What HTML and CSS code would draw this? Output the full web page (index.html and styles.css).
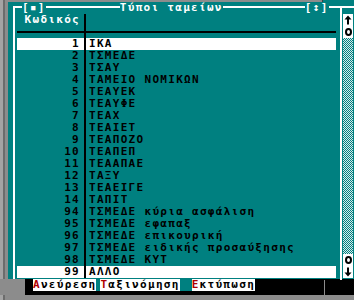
FILE: index.html
```html
<!DOCTYPE html>
<html lang="el">
<head>
    <meta charset="UTF-8">
    <title>Τύποι ταμείων</title>
    <link rel="stylesheet" href="styles.css">
</head>
<body>
    <div class="window">
        <div class="frame">
            <div class="titlebar">
                <span class="tt t-close">[▪]</span>
                <span class="tt t-name">Τύποι ταμείων</span>
                <span class="tt t-zoom">[↕]</span>
            </div>
            <div class="pane">
                <div class="list">
                    <div class="row head"><span class="code">Κωδικός</span><span class="name"></span></div>
                    <div class="row rule"><span class="code"></span><span class="name"></span></div>
                    <div class="row sel"><span class="code">1</span><span class="name">ΙΚΑ</span></div>
                    <div class="row"><span class="code">2</span><span class="name">ΤΣΜΕΔΕ</span></div>
                    <div class="row"><span class="code">3</span><span class="name">ΤΣΑΥ</span></div>
                    <div class="row"><span class="code">4</span><span class="name">ΤΑΜΕΙΟ ΝΟΜΙΚΩΝ</span></div>
                    <div class="row"><span class="code">5</span><span class="name">ΤΕΑΥΕΚ</span></div>
                    <div class="row"><span class="code">6</span><span class="name">ΤΕΑΥΦΕ</span></div>
                    <div class="row"><span class="code">7</span><span class="name">ΤΕΑΧ</span></div>
                    <div class="row"><span class="code">8</span><span class="name">ΤΕΑΙΕΤ</span></div>
                    <div class="row"><span class="code">9</span><span class="name">ΤΕΑΠΟΖΟ</span></div>
                    <div class="row"><span class="code">10</span><span class="name">ΤΕΑΠΕΠ</span></div>
                    <div class="row"><span class="code">11</span><span class="name">ΤΕΑΑΠΑΕ</span></div>
                    <div class="row"><span class="code">12</span><span class="name">ΤΑΞΥ</span></div>
                    <div class="row"><span class="code">13</span><span class="name">ΤΕΑΕΙΓΕ</span></div>
                    <div class="row"><span class="code">14</span><span class="name">ΤΑΠΙΤ</span></div>
                    <div class="row"><span class="code">94</span><span class="name">ΤΣΜΕΔΕ κύρια ασφάλιση</span></div>
                    <div class="row"><span class="code">95</span><span class="name">ΤΣΜΕΔΕ εφαπαξ</span></div>
                    <div class="row"><span class="code">96</span><span class="name">ΤΣΜΕΔΕ επικουρική</span></div>
                    <div class="row"><span class="code">97</span><span class="name">ΤΣΜΕΔΕ ειδικής προσαύξησης</span></div>
                    <div class="row"><span class="code">98</span><span class="name">ΤΣΜΕΔΕ ΚΥΤ</span></div>
                    <div class="row sel"><span class="code">99</span><span class="name">ΑΛΛΟ</span></div>
                </div>
                <div class="vsep"></div>
                <div class="scroll">
                    <div class="sb">
                        <svg width="10" height="12" viewBox="0 0 10 12"><path d="M5 1.5 L8.5 5.5 H6 V10.5 H4 V5.5 H1.5 Z" fill="#000"/></svg>
                    </div>
                    <div class="sb"><span class="ring"></span></div>
                    <div class="track"></div>
                    <div class="sb"><span class="ring"></span></div>
                    <div class="sb">
                        <svg width="10" height="12" viewBox="0 0 10 12"><path d="M5 10.5 L8.5 6.5 H6 V1.5 H4 V6.5 H1.5 Z" fill="#000"/></svg>
                    </div>
                </div>
            </div>
        </div>
    </div>

    <div class="footer">
        <div class="menu">
            <span class="mi"><b>Α</b>νεύρεση</span><span class="gap g1"></span><span class="mi"><b>Τ</b>αξινόμηση</span><span class="gap g2"></span><span class="mi"><b>Ε</b>κτύπωση</span>
        </div>
    </div>
</body>
</html>
```

FILE: styles.css
```css
body {
    margin: 0;
    width: 354px;
    height: 300px;
    overflow: hidden;
    font-family: 'DejaVu Sans Mono', 'Liberation Mono', monospace;
    font-weight: bold;
    font-size: 11px;
    letter-spacing: 1.3px;
    line-height: 12px;
    color: #000;
    background:
        linear-gradient(#404040, #404040) 322px 0 / 1px 3px no-repeat,
        linear-gradient(#008080, #008080) 323px 0 / 31px 2px no-repeat,
        linear-gradient(to right, #a4a4a4 0 3px, #6c6c6c 3px 5px, #8c8c8c 5px);
}

.window {
    margin: 2px 0 0 8px;
    width: 346px;
    height: 282px;
    background: #008080;
    overflow: hidden;
}

.frame {
    margin: 4px 0 0 5px;
    width: 400px;
    border: 2px solid #fff;
    border-right: none;
}

/* title sits on top of the frame line */
.titlebar {
    display: flex;
    height: 12px;
    margin: -6px 0 -6px 0;
    color: #fff;
}

.tt {
    background: #008080;
    white-space: pre;
}

.t-close { margin-left: 7px; }
.t-name { margin-left: 74px; }
.t-zoom { margin-left: 82px; }

.pane {
    display: flex;
    height: 272px;
}

.list {
    width: 325px;
    padding-top: 6px;
}

.row {
    display: flex;
    height: 12px;
    margin-left: 2px;
    width: 319px;
    white-space: pre;
}

.row .code {
    width: 63px;
    padding-right: 4px;
    text-align: right;
}

.row .name {
    flex: 1;
    border-left: 2px solid #000;
    padding-left: 3px;
}

.head .code {
    color: #fff;
}

.rule {
    background: linear-gradient(#000, #000) 0 5px / 100% 2px no-repeat;
}

.sel {
    background: #fff;
}

.vsep {
    width: 2px;
    background: #fff;
}

.scroll {
    width: 10px;
    margin-left: 1px;
    padding: 6px 0 2px;
    display: flex;
    flex-direction: column;
}

.sb {
    height: 12px;
    background: #fff;
    display: flex;
    align-items: center;
    justify-content: center;
}

.sb svg {
    display: block;
}

.ring {
    display: block;
    width: 7px;
    height: 8px;
    box-sizing: border-box;
    border: 2px solid #000;
    border-radius: 50%;
}

.track {
    flex: 1;
    background: repeating-conic-gradient(#008080 0% 25%, #d8eaea 0% 50%) 0 0 / 2px 2px;
}

.footer {
    height: 16px;
    background:
        linear-gradient(#8c8c8c, #8c8c8c) 324px 1px / 1px 15px no-repeat,
        linear-gradient(to right, #8c8c8c 0 25px, #000 25px);
}

.menu {
    display: flex;
    height: 12px;
    margin-top: -5px;
    padding-left: 33px;
    white-space: pre;
}

.mi {
    background: #fff;
}

.mi b {
    color: #b00000;
    font-weight: bold;
}

.gap {
    background: #008080;
}

.g1 { width: 4px; }
.g2 { width: 12px; }
```
